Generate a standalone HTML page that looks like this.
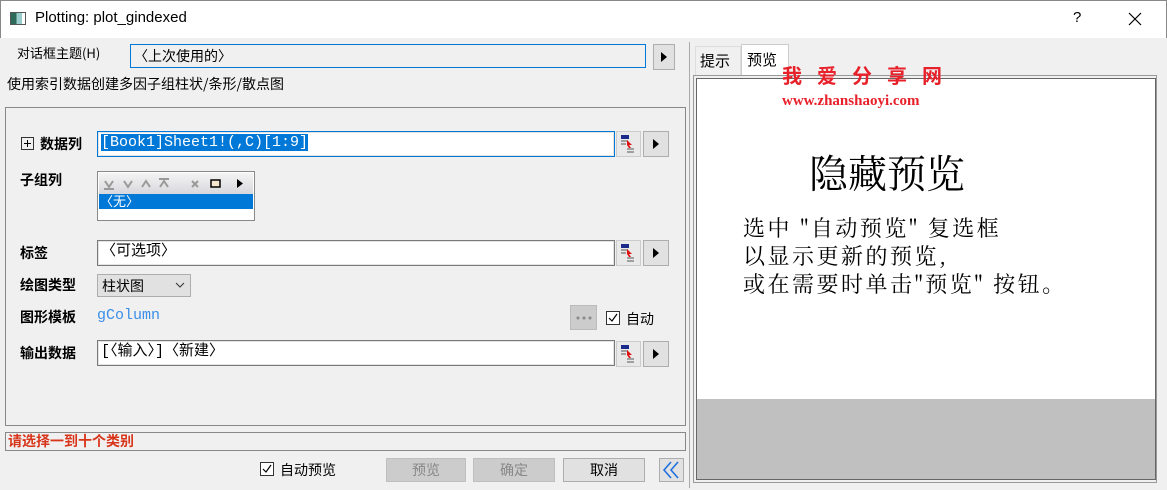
<!DOCTYPE html>
<html><head><meta charset="utf-8"><style>
*{box-sizing:border-box;margin:0;padding:0}
body{width:1167px;height:490px;overflow:hidden;background:#f0f0f0;font-family:"Liberation Sans","Noto Sans CJK SC",sans-serif;font-size:14px;color:#000;position:relative}
.a{position:absolute}
.zh{font-family:"Noto Sans CJK SC",sans-serif}
.inp{position:absolute;background:#fff;border:1px solid #7a7a7a;box-shadow:inset 0 0 0 1px #e3e3e3;font-family:"Liberation Mono","Noto Sans CJK SC",monospace;font-size:15px;padding:1px 3px;line-height:20px}
.btn{position:absolute;background:#e1e1e1;border:1px solid #adadad}
.arr{width:0;height:0;border-top:5px solid transparent;border-bottom:5px solid transparent;border-left:6px solid #000;position:absolute;left:9px;top:7px}
.lbl{position:absolute;font-weight:bold;font-size:14px}
.chk{position:absolute;width:14px;height:14px;border:1px solid #333;background:#fff}
.bb{position:absolute;height:24px;border:1px solid #adadad;background:#e1e1e1;text-align:center;line-height:22px;font-size:14px}
.serif{font-family:"Noto Serif CJK SC",serif}
</style></head><body>
<div class="a" style="left:0;top:0;width:1167px;height:38px;background:#fff;border:1px solid #888;border-bottom:none"></div>
<div class="a" style="left:10px;top:12px;width:16px;height:13px;border:1px solid #555;background:linear-gradient(90deg,#2d6a5a 0 40%,#9cc 40% 80%,#fff 80%)"></div>
<div class="a" style="left:35px;top:9px;font-size:15px">Plotting: plot_gindexed</div>
<div class="a" style="left:1073px;top:9px;font-size:15px">?</div>
<svg class="a" style="left:1128px;top:12px" width="14" height="14"><path d="M1 1L13 13M13 1L1 13" stroke="#000" stroke-width="1.2"/></svg>

<div class="a zh" style="left:17px;top:43px;font-size:13px">对话框主题(H)</div>
<div class="a" style="left:130px;top:44px;width:516px;height:24px;border:1px solid #0078d7;background:#f0f0f0;font-size:14px;padding:1px 3px">〈上次使用的〉</div>
<div class="btn" style="left:653px;top:44px;width:22px;height:26px"><div class="arr" style="top:7px;left:7px"></div></div>
<div class="a zh" style="left:7px;top:74px;font-size:14px">使用索引数据创建多因子组柱状/条形/散点图</div>

<div class="a" style="left:5px;top:107px;width:681px;height:319px;border:1px solid #888"></div>
<svg class="a" style="left:21px;top:137px" width="13" height="13"><rect x="0.5" y="0.5" width="12" height="12" fill="none" stroke="#333"/><path d="M3 6.5H10M6.5 3V10" stroke="#000"/></svg>
<div class="lbl" style="left:40px;top:134px">数据列</div>
<div class="inp" style="left:97px;top:131px;width:518px;height:26px;border-color:#0078d7"><span style="background:#0078d7;color:#fff">[Book1]Sheet1!(,C)[1:9]</span></div>

<div class="lbl" style="left:20px;top:170px">子组列</div>
<div class="a" style="left:97px;top:171px;width:158px;height:50px;border:1px solid #888;background:#fff"></div>
<div class="a" style="left:99px;top:173px;width:154px;height:21px;background:linear-gradient(#f4f4f4,#d8d8dc)"></div>
<svg class="a" style="left:99px;top:173px" width="154" height="21">
<g stroke="#999" stroke-width="2" fill="none"><path d="M6 8L10 14L14 8M5 16H15"/><path d="M25 8L29 14L33 8"/><path d="M43 14L47 8L51 14"/><path d="M61 14L65 8L69 14M60 6H70"/><path d="M93 8L99 14M99 8L93 14"/></g>
<rect x="112" y="7" width="9" height="7" fill="#f5e6d0" stroke="#000" stroke-width="1.5"/>
<path d="M138 6L144 10.5L138 15Z" fill="#000"/></svg>
<div class="a" style="left:99px;top:194px;width:154px;height:15px;background:#0078d7;color:#fff;font-size:13px;line-height:15px;padding-left:1px">〈无〉</div>

<div class="lbl" style="left:20px;top:243px">标签</div>
<div class="inp" style="left:97px;top:240px;width:518px;height:26px">〈可选项〉</div>

<div class="lbl" style="left:20px;top:275px">绘图类型</div>
<div class="a" style="left:97px;top:274px;width:94px;height:23px;border:1px solid #adadad;background:#e1e1e1;font-size:14px;padding:1px 4px">柱状图</div>
<svg class="a" style="left:175px;top:282px" width="10" height="6"><path d="M1 1L5 5L9 1" stroke="#333" fill="none"/></svg>

<div class="lbl" style="left:20px;top:307px">图形模板</div>
<div class="a" style="left:97px;top:307px;color:#3b8ee8;font-family:'Liberation Mono',monospace;font-size:15px">gColumn</div>
<div class="a" style="left:570px;top:305px;width:27px;height:25px;background:#ccc;border:1px solid #bbb"></div>
<svg class="a" style="left:576px;top:316px" width="16" height="4"><circle cx="2" cy="2" r="1.5" fill="#888"/><circle cx="8" cy="2" r="1.5" fill="#888"/><circle cx="14" cy="2" r="1.5" fill="#888"/></svg>
<div class="chk" style="left:606px;top:311px"></div><svg class="a" style="left:606px;top:311px" width="14" height="14"><path d="M3 7L6 10L11 3" stroke="#000" fill="none" stroke-width="1.2"/></svg>
<div class="a" style="left:626px;top:309px">自动</div>

<div class="lbl" style="left:20px;top:343px">输出数据</div>
<div class="inp" style="left:97px;top:340px;width:518px;height:26px">[〈输入〉]〈新建〉</div>

<svg class="a" style="left:616px;top:131px" width="55" height="236">
<defs><g id="pk"><rect x="0.5" y="0.5" width="24" height="25" fill="#e9e9e9" stroke="#ccc"/><rect x="5" y="4" width="8" height="4" fill="#1a2a8a"/><path d="M5 10H12M5 13H10M11 18H18M11 21H18" stroke="#888" stroke-width="1.5"/><path d="M11 9L16 14L13 14L15 17L13 17L11 14Z" fill="#e01010"/><rect x="27.5" y="0.5" width="25" height="25" fill="#e1e1e1" stroke="#adadad"/><path d="M37 8L43 13L37 18Z" fill="#000"/></g></defs>
<use href="#pk" x="0" y="0"/><use href="#pk" x="0" y="109"/><use href="#pk" x="0" y="210"/></svg>

<div class="a" style="left:5px;top:432px;width:681px;height:19px;border:1px solid #888"></div>
<div class="a" style="left:8px;top:431px;color:#d8361b;font-weight:bold;font-size:14px">请选择一到十个类别</div>

<div class="chk" style="left:260px;top:462px"></div><svg class="a" style="left:260px;top:462px" width="14" height="14"><path d="M3 7L6 10L11 3" stroke="#000" fill="none" stroke-width="1.2"/></svg>
<div class="a" style="left:280px;top:460px">自动预览</div>
<div class="bb" style="left:386px;top:458px;width:80px;color:#888;background:#ccc;border-color:#bfbfbf">预览</div>
<div class="bb" style="left:473px;top:458px;width:82px;color:#888;background:#ccc;border-color:#bfbfbf">确定</div>
<div class="bb" style="left:563px;top:458px;width:82px">取消</div>
<div class="a" style="left:659px;top:458px;width:25px;height:24px;border:1px solid #adadad;background:#e1e1e1"></div>
<svg class="a" style="left:659px;top:458px" width="25" height="24"><path d="M12 4L5 12L12 20M19 4L12 12L19 20" stroke="#1a6ee0" stroke-width="1.5" fill="none"/></svg>

<div class="a" style="left:689px;top:42px;width:1px;height:446px;background:#aaa"></div>
<div class="a" style="left:695px;top:46px;width:46px;height:29px;border:1px solid #ddd;border-bottom:none;padding:3px 0 0 4px;font-size:15px">提示</div>
<div class="a" style="left:741px;top:44px;width:48px;height:33px;border:1px solid #ccc;border-bottom:none;background:#fff;padding:4px 0 0 5px;font-size:15px">预览</div>
<div class="a" style="left:693px;top:75px;width:464px;height:408px;border:1px solid #999;background:#f0f0f0"></div>
<div class="a" style="left:696px;top:78px;width:460px;height:402px;border:1px solid #666;background:#fff"></div>
<div class="a" style="left:697px;top:399px;width:458px;height:80px;background:#c0c0c0"></div>
<div class="a" style="left:782px;top:60px;color:#e8202a;font-weight:bold;font-size:20px;letter-spacing:15px">我爱分享网</div>
<div class="a" style="left:782px;top:93px;color:#e8202a;font-weight:bold;font-size:15px;font-family:'Liberation Serif',serif">www.zhanshaoyi.com</div>
<div class="a serif" style="left:809px;top:144px;font-size:39px">隐藏预览</div>
<div class="a serif" style="left:743px;top:214px;font-size:22px;line-height:28px;letter-spacing:2.5px">选中 "自动预览" 复选框<br>以显示更新的预览,<br>或在需要时单击"预览" 按钮。</div>
</body></html>
